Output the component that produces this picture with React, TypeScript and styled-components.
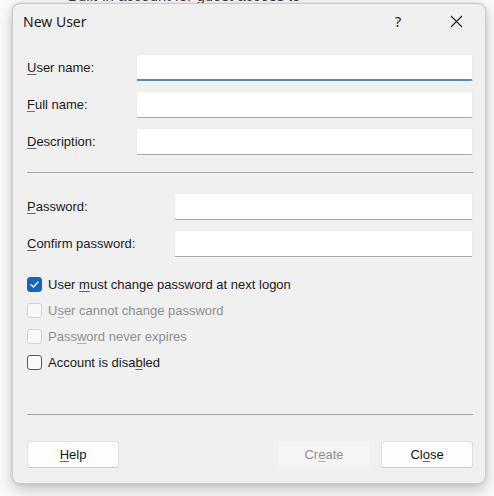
import React from 'react';
import styled, { createGlobalStyle } from 'styled-components';

const GlobalStyle = createGlobalStyle`
html, body {
  margin: 0;
  padding: 0;
  background: #fbfbfb;
  width: 494px;
  height: 496px;
  overflow: hidden;
  font-family: "Liberation Sans", Arial, sans-serif;
}
`;

const Behind = styled.div`
height: 3px;
overflow: hidden;
padding-left: 68px;
font-size: 15px;
color: #3a3a3a;
white-space: nowrap;
span {
  display: block;
  margin-top: -13px;
}
`;

const Dialog = styled.div`
box-sizing: border-box;
margin-left: 12px;
width: 474px;
height: 481px;
background: #f0f0f0;
border: 1px solid #c9c9c9;
border-radius: 8px;
box-shadow: 0 6px 16px rgba(0, 0, 0, 0.22), 0 0 4px rgba(0, 0, 0, 0.12);
display: flex;
flex-direction: column;
`;

const TitleBar = styled.div`
height: 34px;
display: flex;
align-items: center;
padding: 0 0 0 10px;
`;

const Title = styled.div`
flex: 1;
font-family: "Noto Sans", "Open Sans", sans-serif;
font-size: 14px;
color: #1b1b1b;
`;

const TitleButton = styled.div`
width: 58px;
height: 34px;
display: flex;
align-items: center;
justify-content: center;
font-family: "Noto Sans", sans-serif;
font-size: 15px;
color: #222;
`;

const Body = styled.div`
flex: 1;
display: flex;
flex-direction: column;
padding: 16px 12px 0 14px;
`;

const FieldGrid = styled.div<{ $label: number }>`
display: grid;
grid-template-columns: ${p => p.$label}px 1fr;
row-gap: 10px;
align-items: center;
`;

const Label = styled.label<{ $disabled?: boolean }>`
font-size: 13px;
color: ${p => (p.$disabled ? '#8e8e8e' : '#1a1a1a')};
u {
  text-decoration-color: ${p => (p.$disabled ? '#b0b0b0' : '#6a6a6a')};
  text-underline-offset: 2px;
}
`;

const Field = styled.div<{ $focused?: boolean }>`
box-sizing: border-box;
height: 27px;
background: #ffffff;
border: 1px solid #ececec;
border-radius: 2px;
border-bottom: ${p => (p.$focused ? '2px solid #5a8bb0' : '1px solid #a9a9a9')};
`;

const Separator = styled.hr<{ $top: number; $bottom: number }>`
border: none;
border-top: 1px solid #a6a6a6;
margin: ${p => p.$top}px 0 ${p => p.$bottom}px 0;
`;

const CheckList = styled.div`
display: flex;
flex-direction: column;
margin-top: 14px;
`;

const CheckRow = styled.div`
height: 26px;
display: flex;
align-items: center;
gap: 6px;
`;

const Box = styled.span<{ $state: 'checked' | 'off' | 'disabled' }>`
box-sizing: border-box;
width: 15px;
height: 15px;
border-radius: 3px;
display: flex;
align-items: center;
justify-content: center;
background: ${p => (p.$state === 'checked' ? '#1a63b8' : p.$state === 'disabled' ? '#f8f8f8' : '#f9f9f9')};
border: 1px solid ${p => (p.$state === 'checked' ? '#1a63b8' : p.$state === 'disabled' ? '#d2d2d2' : '#5a5a5a')};
`;

const Footer = styled.div`
display: flex;
gap: 11px;
padding-bottom: 15px;
`;

const Spacer = styled.div`
flex: 1;
`;

const Button = styled.div<{ $disabled?: boolean }>`
box-sizing: border-box;
width: 92px;
height: 27px;
display: flex;
align-items: center;
justify-content: center;
font-size: 13px;
border-radius: 3px;
color: ${p => (p.$disabled ? '#8f8f8f' : '#151515')};
background: ${p => (p.$disabled ? '#f5f5f5' : '#fdfdfd')};
border: 1px solid ${p => (p.$disabled ? '#f2f2f2' : '#dedede')};
border-bottom-color: ${p => (p.$disabled ? '#f2f2f2' : '#cbcbcb')};
u {
  text-decoration-color: ${p => (p.$disabled ? '#b0b0b0' : '#6a6a6a')};
  text-underline-offset: 2px;
}
`;

function CloseIcon() {
  return (
    <svg width="13" height="13" viewBox="0 0 13 13">
      <path d="M1 1 L12 12 M12 1 L1 12" stroke="#222" strokeWidth="1.1" fill="none" />
    </svg>
  );
}

function Tick() {
  return (
    <svg width="11" height="11" viewBox="0 0 11 11">
      <path d="M2 5.8 L4.4 8 L9 3" stroke="#fff" strokeWidth="1.3" fill="none" strokeLinecap="round" strokeLinejoin="round" />
    </svg>
  );
}

const checks: { key: string; pre: string; acc: string; post: string; state: 'checked' | 'off' | 'disabled' }[] = [
  { key: 'must', pre: 'User ', acc: 'm', post: 'ust change password at next logon', state: 'checked' },
  { key: 'cannot', pre: 'U', acc: 's', post: 'er cannot change password', state: 'disabled' },
  { key: 'never', pre: 'Pass', acc: 'w', post: 'ord never expires', state: 'disabled' },
  { key: 'disabled', pre: 'Account is disa', acc: 'b', post: 'led', state: 'off' },
];

function App() {
  return <>
    <GlobalStyle />
    <Behind><span>Built-in account for guest access to</span></Behind>
    <Dialog>
      <TitleBar>
        <Title>New User</Title>
        <TitleButton>?</TitleButton>
        <TitleButton><CloseIcon /></TitleButton>
      </TitleBar>
      <Body>
        <FieldGrid $label={109}>
          <Label><u>U</u>ser name:</Label>
          <Field $focused />
          <Label><u>F</u>ull name:</Label>
          <Field />
          <Label><u>D</u>escription:</Label>
          <Field />
        </FieldGrid>
        <Separator $top={17} $bottom={20} />
        <FieldGrid $label={147}>
          <Label><u>P</u>assword:</Label>
          <Field />
          <Label><u>C</u>onfirm password:</Label>
          <Field />
        </FieldGrid>
        <CheckList>
          {checks.map(c => (
            <CheckRow key={c.key}>
              <Box $state={c.state}>{c.state === 'checked' && <Tick />}</Box>
              <Label $disabled={c.state === 'disabled'}>{c.pre}<u>{c.acc}</u>{c.post}</Label>
            </CheckRow>
          ))}
        </CheckList>
        <Spacer />
        <Separator $top={0} $bottom={26} />
        <Footer>
          <Button><u>H</u>elp</Button>
          <Spacer />
          <Button $disabled>Cr<u>e</u>ate</Button>
          <Button>Cl<u>o</u>se</Button>
        </Footer>
      </Body>
    </Dialog>
  </>;
}

export default App;
